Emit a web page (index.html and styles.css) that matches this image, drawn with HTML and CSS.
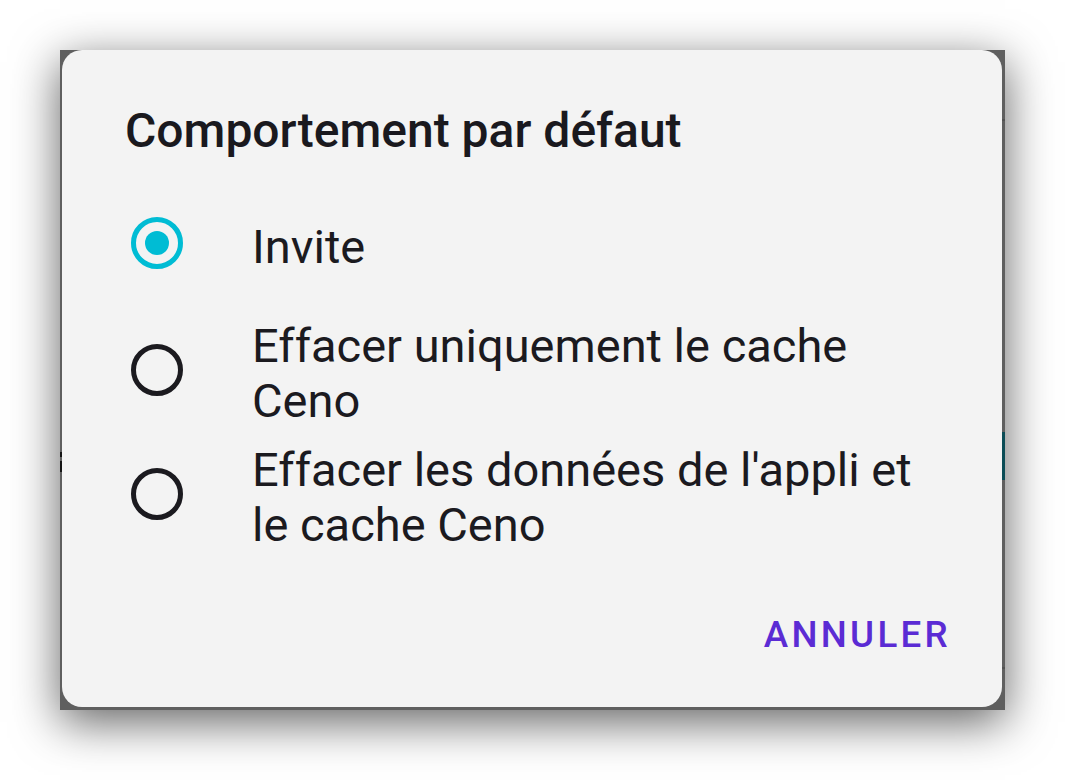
FILE: index.html
```html
<!DOCTYPE html>
<html lang="fr">
<head>
<meta charset="utf-8">
<title>Comportement par défaut</title>
<link rel="stylesheet" href="styles.css">
</head>
<body>
<div class="screen">
  <span class="bg-mark bg-mark-a"></span>
  <span class="bg-mark bg-mark-b"></span>
  <span class="bg-strip"></span>
  <span class="bg-line bg-line-a"></span>
  <span class="bg-line bg-line-b"></span>
  <div class="dialog">
    <h1 class="dialog-title">Comportement par défaut</h1>
    <div class="choices">
      <div class="choice choice-single">
        <span class="radio radio-checked"><span class="radio-dot"></span></span>
        <span class="choice-label">Invite</span>
      </div>
      <div class="choice">
        <span class="radio"></span>
        <span class="choice-label">Effacer uniquement le cache Ceno</span>
      </div>
      <div class="choice">
        <span class="radio"></span>
        <span class="choice-label">Effacer les données de l'appli et le cache Ceno</span>
      </div>
    </div>
    <div class="actions">
      <span class="text-button">ANNULER</span>
    </div>
  </div>
</div>
</body>
</html>
```

FILE: styles.css
```css
html, body {
  margin: 0;
  padding: 0;
  background: #ffffff;
}

body {
  width: 1065px;
  height: 780px;
  overflow: hidden;
  font-family: Roboto, "Noto Sans", "Liberation Sans", sans-serif;
  padding-top: 50px;
  padding-left: 60px;
  box-sizing: border-box;
}

.screen {
  position: relative;
  width: 945px;
  height: 660px;
  box-sizing: border-box;
  padding: 0 3px 3px 2px;
  background: #5f5f5f;
  box-shadow: 0 12px 44px rgba(0, 0, 0, 0.62);
}

.bg-mark {
  position: absolute;
  left: 0;
  width: 2px;
  background: #151515;
}
.bg-mark-a { top: 402px; height: 5px; }
.bg-mark-b { top: 411px; height: 11px; }

.bg-strip {
  position: absolute;
  right: 0;
  top: 382px;
  width: 3px;
  height: 48px;
  background: #0b4c56;
}

.bg-line {
  position: absolute;
  right: 0;
  width: 3px;
  height: 2px;
  background: #525252;
}
.bg-line-a { top: 69px; }
.bg-line-b { top: 617px; }

.dialog {
  width: 940px;
  height: 657px;
  box-sizing: border-box;
  background: #f3f3f3;
  border-radius: 20px;
  padding-top: 53px;
  display: flex;
  flex-direction: column;
}

.dialog-title {
  margin: 0;
  padding: 0 63px;
  font-size: 48px;
  font-weight: 500;
  line-height: 56px;
  color: #1a191e;
}

.choices {
  margin-top: 22px;
  display: flex;
  flex-direction: column;
}

.choice {
  display: flex;
  align-items: center;
  padding: 7px 63px 7px 0;
  min-height: 124px;
  box-sizing: border-box;
}

.choice-single {
  min-height: 130px;
  padding-top: 0;
  padding-bottom: 0;
}

.radio {
  flex: none;
  width: 52px;
  height: 52px;
  box-sizing: border-box;
  border: 5px solid #1b1a1f;
  border-radius: 50%;
  margin-left: 69px;
  margin-right: 69px;
  margin-bottom: 6px;
  display: flex;
  align-items: center;
  justify-content: center;
}

.radio-checked {
  border-color: #00bcd4;
}

.radio-dot {
  width: 24px;
  height: 24px;
  border-radius: 50%;
  background: #00bcd4;
}

.choice-label {
  font-size: 47px;
  line-height: 55px;
  color: #1b1a1f;
}

.actions {
  margin-top: 54px;
  display: flex;
  justify-content: flex-end;
  padding-right: 51px;
}

.text-button {
  font-size: 36.75px;
  font-weight: 500;
  line-height: 43px;
  letter-spacing: 3.28px;
  color: #5b2bd4;
}
```
